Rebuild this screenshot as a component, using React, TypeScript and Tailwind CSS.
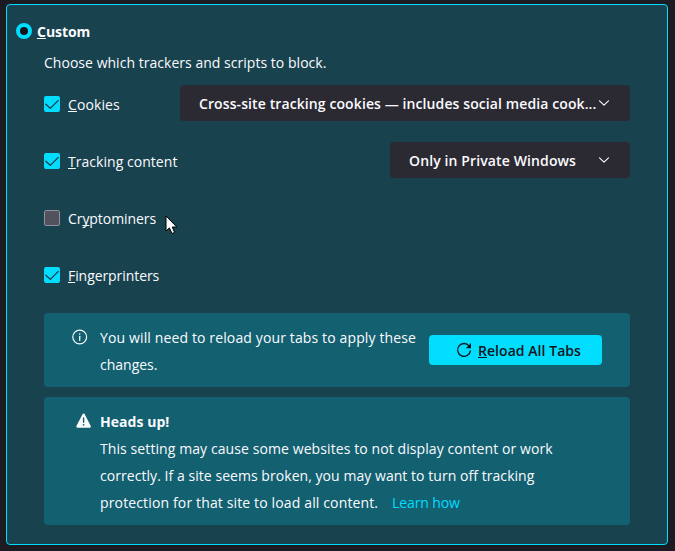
import type { ReactNode } from "react";

function Check({ checked = true }: { checked?: boolean }) {
  if (!checked) {
    return <span className="size-4 shrink-0 rounded-[2px] border border-[#8f8f9d] bg-[#52525e]" />;
  }
  return (
    <span className="size-4 shrink-0 rounded-[2px] bg-[#00ddff]">
      <svg viewBox="0 0 16 16" className="size-4" fill="none" stroke="#1d3440" strokeWidth="1.2" strokeLinecap="round" strokeLinejoin="round">
        <path d="M1.8 8.2 6.3 12.3 14.3 4.3" />
      </svg>
    </span>
  );
}

function Row({ letter, before = "", rest, track, checked, children }: { letter: string; before?: string; rest: string; track: string; checked?: boolean; children?: ReactNode }) {
  return (
    <div className="flex h-[57px] items-center">
      <Check checked={checked} />
      <span className={`ml-2 pt-px ${track}`}>
        {before}
        <Key>{letter}</Key>
        {rest}
      </span>
      {children}
    </div>
  );
}

function Key({ children }: { children: ReactNode }) {
  return <span className="underline decoration-1 underline-offset-1 [text-decoration-skip-ink:none]">{children}</span>;
}

function Chevron() {
  return (
    <svg viewBox="0 0 12 8" className="h-2 w-3 shrink-0" fill="none" stroke="#fbfbfe" strokeWidth="1.1" strokeLinecap="round" strokeLinejoin="round">
      <path d="M1.5 1.8 6 6.2 10.5 1.8" />
    </svg>
  );
}

export default function App() {
  return (
    <div className="h-[551px] w-[675px] overflow-hidden bg-[#1c1b22] pt-1 pl-1.5 font-['Open_Sans','Noto_Sans',sans-serif] text-[14px] leading-[27px] whitespace-nowrap text-[#fbfbfe]">
      <div className="relative h-[541px] w-[662px] rounded-[4px] border border-[#00ddff] bg-[#18424e] pt-3 pl-[9px]">
        <div className="flex h-[27px] items-center">
          <span className="size-4 rounded-full border-4 border-[#00ddff] bg-[#15141a]" />
          <span className="ml-[5px] pt-px font-bold tracking-[-0.05px]">
            <Key>C</Key>ustom
          </span>
        </div>
        <div className="ml-7 w-[586px]">
          <p className="mt-[5px] h-[26px] tracking-[0.03px]">Choose which trackers and scripts to block.</p>
          <Row letter="C" rest="ookies" track="tracking-[0.1px]">
            <div className="mb-0.5 ml-auto flex h-9 w-[450px] items-center rounded-[4px] bg-[#2b2a33] pl-[19px]">
              <span className="w-[399px] pt-0.5 font-semibold tracking-[0.1px]">Cross-site tracking cookies — includes social media cook...</span>
              <Chevron />
            </div>
          </Row>
          <Row letter="T" rest="racking content" track="tracking-[0.04px]">
            <div className="mb-0.5 ml-auto flex h-9 w-[240px] items-center rounded-[4px] bg-[#2b2a33] pl-[19px]">
              <span className="w-[189px] pt-0.5 font-semibold tracking-[0.12px]">Only in Private Windows</span>
              <Chevron />
            </div>
          </Row>
          <Row before="Cr" letter="y" rest="ptominers" track="tracking-[-0.07px]" checked={false} />
          <Row letter="F" rest="ingerprinters" track="tracking-[-0.07px]" />

          <div className="mt-[10px] flex h-[74px] rounded-[4px] bg-[#136071] pl-7">
            <svg viewBox="0 0 16 16" className="mt-4 size-4 shrink-0">
              <circle cx="7.7" cy="8" r="6.9" fill="none" stroke="#fbfbfe" strokeWidth="1.2" />
              <circle cx="7.7" cy="5" r="0.8" fill="#fbfbfe" />
              <path d="M7.7 7.3v4" stroke="#fbfbfe" strokeWidth="1.3" strokeLinecap="round" />
            </svg>
            <div className="mt-[11px] ml-3 w-[329px]">
              <p className="tracking-[0.13px]">You will need to reload your tabs to apply these</p>
              <p className="tracking-[0px]">changes.</p>
            </div>
            <button className="mt-[22px] flex h-[30px] w-[173px] items-center rounded-[4px] bg-[#00ddff] pl-[27px] text-[#15141a]">
              <svg viewBox="0 0 16 16" className="size-4 shrink-0">
                <path d="M13.2 4.1A6.4 6.4 0 1 0 14.4 8.8" fill="none" stroke="#15141a" strokeWidth="1.3" strokeLinecap="round" />
                <path d="M15 1v5.2H9.8z" fill="#15141a" />
              </svg>
              <span className="ml-1.5 pt-px font-semibold tracking-[0.05px]">
                <Key>R</Key>eload All Tabs
              </span>
            </button>
          </div>

          <div className="mt-[10px] flex h-32 rounded-[4px] bg-[#136071] pt-[11px] pl-8">
            <svg viewBox="0 0 16 16" className="mt-[5px] size-4 shrink-0">
              <path d="M7.6 1.6 13.8 13.6H1.4z" fill="#fbfbfe" stroke="#fbfbfe" strokeWidth="2.2" strokeLinejoin="round" />
              <path d="M7.6 5v4.3" stroke="#136071" strokeWidth="1.4" strokeLinecap="round" />
              <circle cx="7.6" cy="11.8" r="0.9" fill="#136071" />
            </svg>
            <div className="ml-2">
              <p className="font-bold tracking-[0.05px]">Heads up!</p>
              <p className="tracking-[0.09px]">This setting may cause some websites to not display content or work</p>
              <p className="tracking-[0.05px]">correctly. If a site seems broken, you may want to turn off tracking</p>
              <p className="flex tracking-[0.14px]">
                <span className="w-[292px]">protection for that site to load all content.</span>
                <a className="tracking-[-0.1px] text-[#00ddff]">Learn how</a>
              </p>
            </div>
          </div>
        </div>
        <svg viewBox="0 0 13 20" className="absolute top-[210px] left-[158px] h-5 w-[13px]">
          <path d="M1 1V16L4.4 12.9 7 18.5 9.6 17.4 7.2 12H11.8z" fill="#fff" stroke="#000" strokeWidth="1" />
        </svg>
      </div>
    </div>
  );
}
